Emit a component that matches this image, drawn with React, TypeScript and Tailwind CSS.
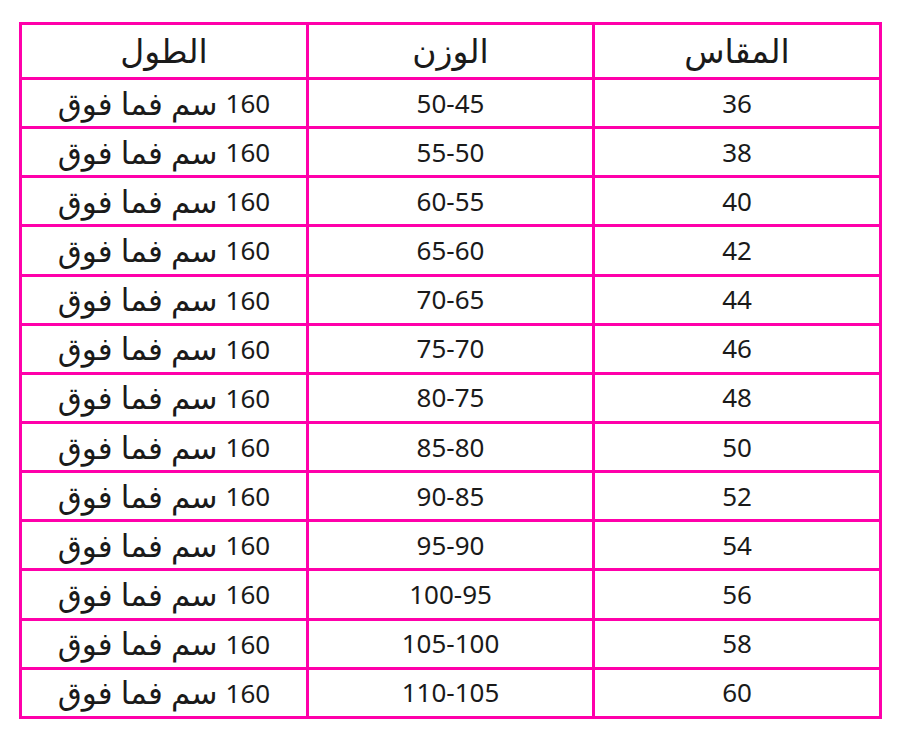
import React from "react";

const rows: [string, string][] = [
  ["36", "50-45"],
  ["38", "55-50"],
  ["40", "60-55"],
  ["42", "65-60"],
  ["44", "70-65"],
  ["46", "75-70"],
  ["48", "80-75"],
  ["50", "85-80"],
  ["52", "90-85"],
  ["54", "95-90"],
  ["56", "100-95"],
  ["58", "105-100"],
  ["60", "110-105"],
];

export default function App() {
  return (
    <div className="w-[901px] h-[742px] bg-white pt-[22px] pl-[19px]" style={{ fontFamily: '"Noto Sans", "DejaVu Sans", sans-serif' }}>
      <div
        dir="rtl"
        className="w-[863px] grid grid-cols-[284px_283px_284px] grid-rows-[52px_repeat(13,46.15px)] gap-[3px] p-[3px] bg-[#ff00aa] text-[#1a1a1a]"
      >
        <div className="bg-white flex items-center justify-center text-[33px] font-normal leading-none pb-[2px]">المقاس</div>
        <div className="bg-white flex items-center justify-center text-[33px] font-normal leading-none pb-[2px]">الوزن</div>
        <div className="bg-white flex items-center justify-center text-[33px] font-normal leading-none pb-[2px]">الطول</div>
        {rows.map(([s, w], i) => (
          <React.Fragment key={i}>
            <div className="bg-white flex items-center justify-center text-[26px]">{s}</div>
            <div className="bg-white flex items-center justify-center text-[26px]">{w}</div>
            <div className="bg-white flex items-center justify-center text-[26px] leading-none">
              <span>160</span>
              <span className="text-[31px] mr-[8px]">سم فما فوق</span>
            </div>
          </React.Fragment>
        ))}
      </div>
    </div>
  );
}
